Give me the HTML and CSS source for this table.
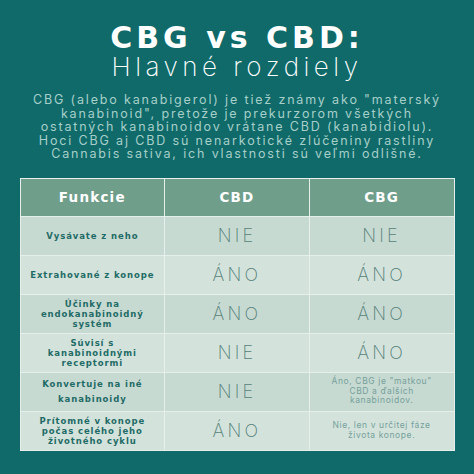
FILE: index.html
```html
<!DOCTYPE html>
<html>
<head>
<meta charset="UTF-8">
<title>CBG vs CBD</title>
<link rel="stylesheet" href="styles.css">
</head>
<body>
<div class="page">
	<h1 class="title">CBG vs CBD:</h1>
	<h2 class="subtitle">Hlavné rozdiely</h2>
	<p class="intro">
		CBG (alebo kanabigerol) je tiež známy ako "materský<br>
		kanabinoid", pretože je prekurzorom všetkých<br>
		ostatných kanabinoidov vrátane CBD (kanabidiolu).<br>
		Hoci CBG aj CBD sú nenarkotické zlúčeniny rastliny<br>
		Cannabis sativa, ich vlastnosti sú veľmi odlišné.
	</p>

	<table class="tbl_compare">
	<tr class="row_head">
		<th>Funkcie</th>
		<th>CBD</th>
		<th>CBG</th>
	</tr>
	<tr class="row_dark">
		<td class="lbl">Vysávate z neho</td>
		<td class="val">NIE</td>
		<td class="val">NIE</td>
	</tr>
	<tr class="row_light">
		<td class="lbl">Extrahované z konope</td>
		<td class="val">ÁNO</td>
		<td class="val">ÁNO</td>
	</tr>
	<tr class="row_dark">
		<td class="lbl">Účinky na<br>endokanabinoidný<br>systém</td>
		<td class="val">ÁNO</td>
		<td class="val">ÁNO</td>
	</tr>
	<tr class="row_light">
		<td class="lbl">Súvisí s<br>kanabinoidnými<br>receptormi</td>
		<td class="val">NIE</td>
		<td class="val">ÁNO</td>
	</tr>
	<tr class="row_dark">
		<td class="lbl lbl_loose">Konvertuje na iné<br>kanabinoidy</td>
		<td class="val">NIE</td>
		<td class="note">Áno, CBG je "matkou"<br>CBD a ďalších<br>kanabinoidov.</td>
	</tr>
	<tr class="row_light">
		<td class="lbl">Prítomné v konope<br>počas celého jeho<br>životného cyklu</td>
		<td class="val">ÁNO</td>
		<td class="note">Nie, len v určitej fáze<br>života konope.</td>
	</tr>
	</table>
</div>
</body>
</html>
```

FILE: styles.css
```css
/* page */
body {
	margin: 0;
	background-color: #0f6a69;
	font-family: "Inter", "Liberation Sans", sans-serif;
}
.page {
	width: 474px;
	height: 474px;
	padding-top: 22px;
	box-sizing: border-box;
	display: flex;
	flex-direction: column;
	align-items: center;
}

/* heading */
.title {
	margin: 0;
	color: #ffffff;
	font-family: "DejaVu Sans", sans-serif;
	font-weight: bold;
	font-size: 30px;
	line-height: 31px;
	letter-spacing: 4px;
}
.subtitle {
	margin: 0;
	color: #ffffff;
	font-weight: 200;
	font-size: 26px;
	line-height: 28px;
	letter-spacing: 4.5px;
}
.intro {
	margin: 12px 0 0 0;
	color: #a7cfc9;
	font-size: 12.5px;
	line-height: 13.5px;
	letter-spacing: 1.85px;
	text-align: center;
	font-weight: 400;
}

/* table */
table.tbl_compare {
	margin-top: 17px;
	width: 435px;
	border-collapse: collapse;
	table-layout: fixed;
}
.tbl_compare th,
.tbl_compare td {
	border: 1px solid #e6efeb;
	text-align: center;
	padding: 0;
}
.row_head th {
	height: 37px;
	background-color: #6f9e8b;
	color: #ffffff;
	font-family: "DejaVu Sans", sans-serif;
	font-size: 13.5px;
	font-weight: bold;
	letter-spacing: 1.2px;
}
.row_dark td {
	height: 38px;
	background-color: #c7dad2;
}
.row_light td {
	height: 38px;
	background-color: #d3e3dc;
}
.tbl_compare .lbl {
	color: #1f6b66;
	font-family: "DejaVu Sans", sans-serif;
	font-size: 8.5px;
	font-weight: bold;
	line-height: 10px;
	letter-spacing: 0.9px;
}
.tbl_compare .lbl_loose {
	line-height: 15px;
}
.tbl_compare .val {
	color: #557f78;
	font-size: 18px;
	font-weight: 200;
	letter-spacing: 3.2px;
}
.tbl_compare .note {
	color: #76a09a;
	font-size: 8.5px;
	line-height: 9.5px;
	letter-spacing: 0.6px;
}
```
